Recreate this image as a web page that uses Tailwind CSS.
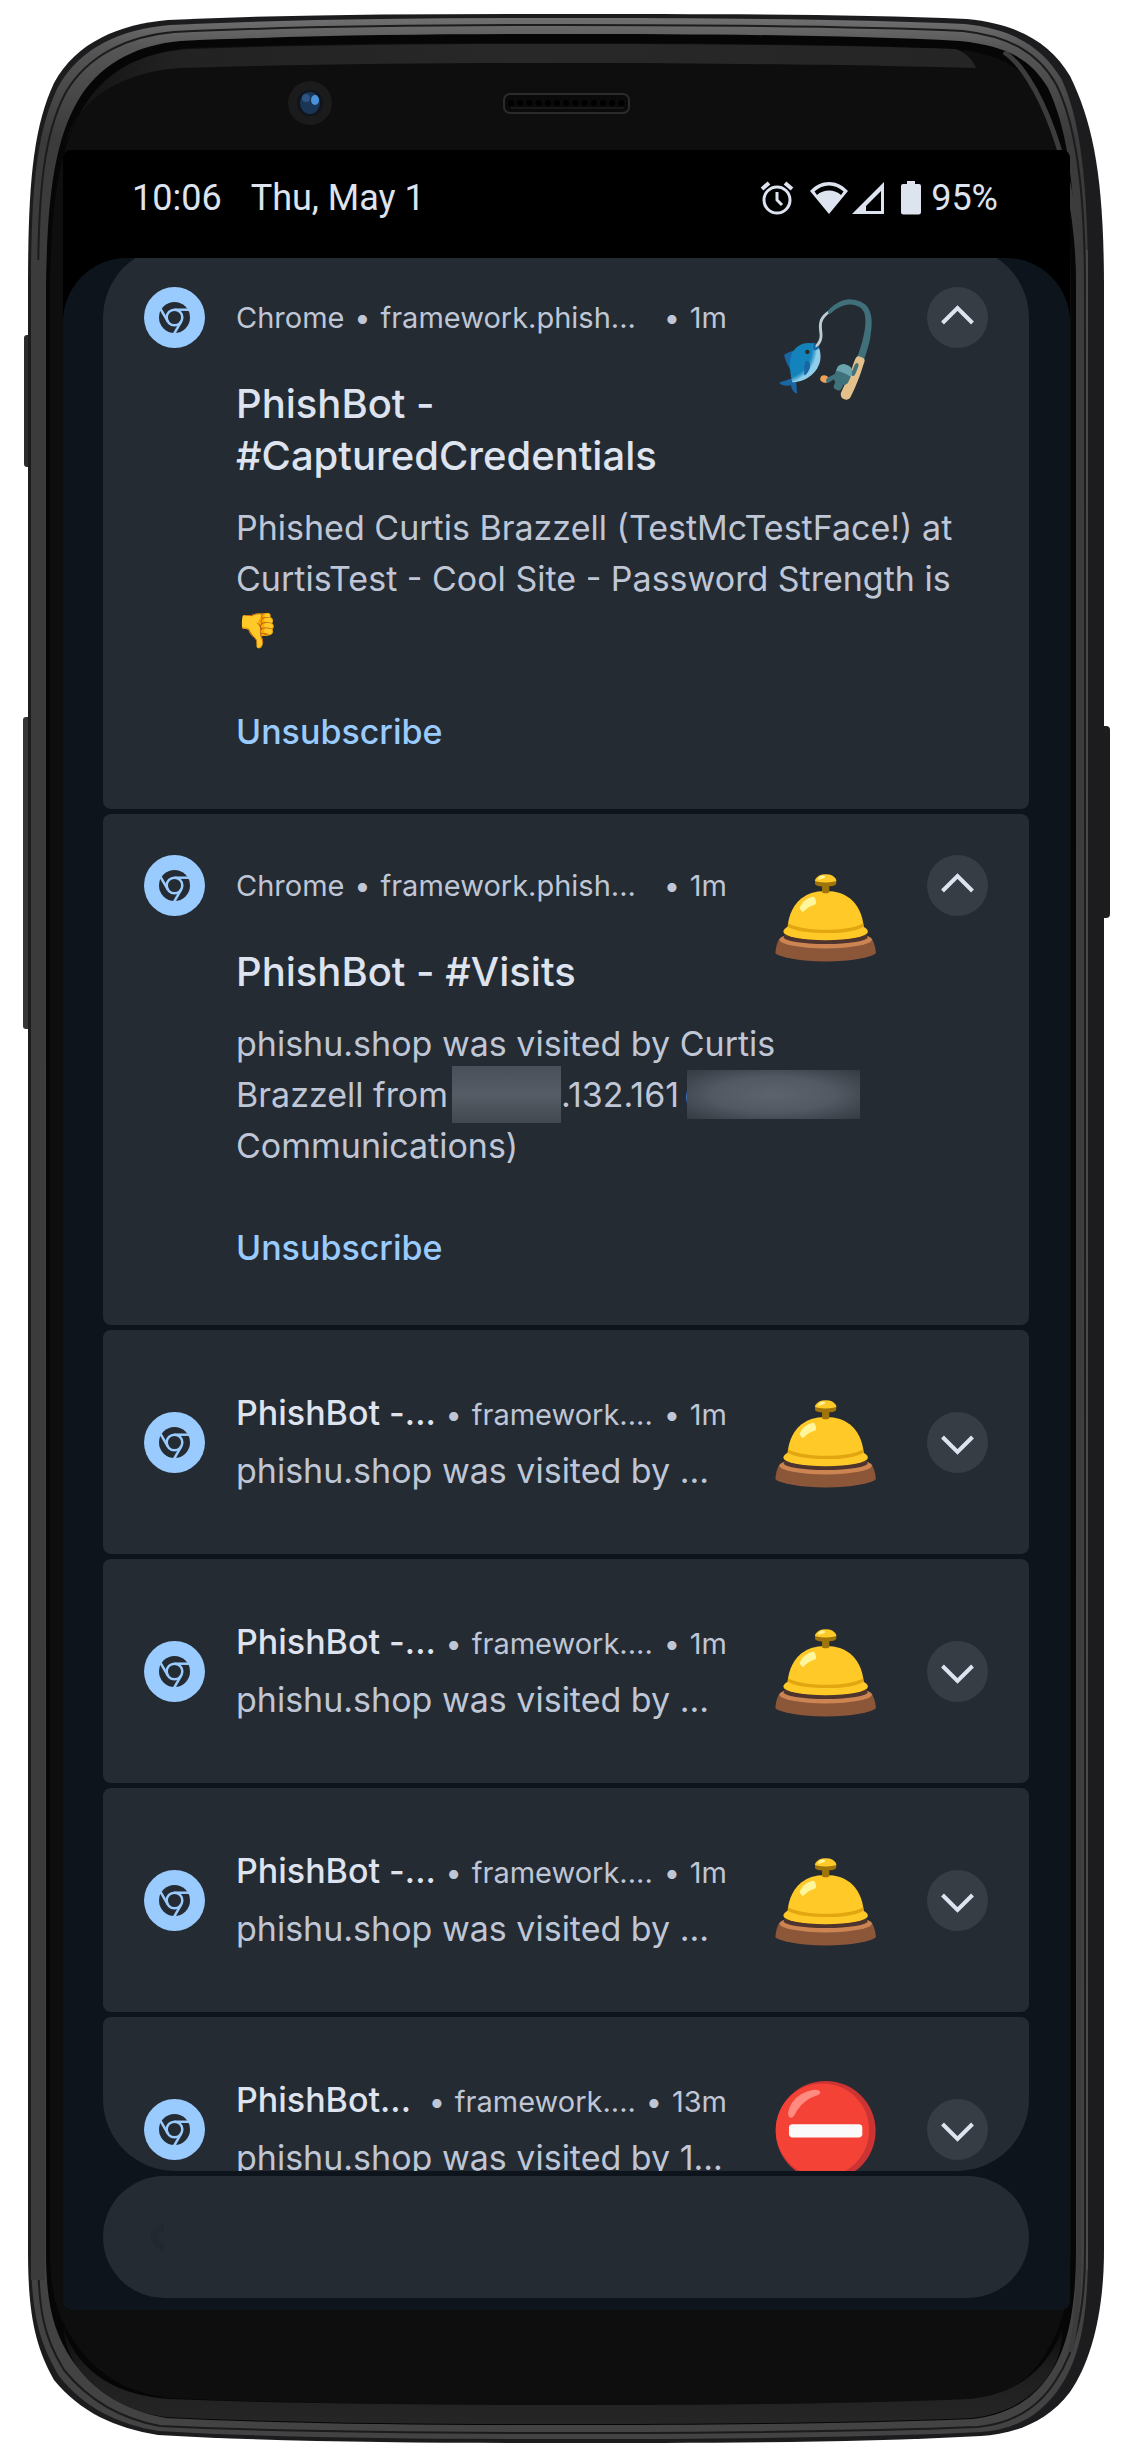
<!DOCTYPE html>
<html lang="en">
<head>
<meta charset="utf-8">
<meta name="viewport" content="width=device-width, initial-scale=1">
<title>Notifications</title>
<script src="https://cdn.jsdelivr.net/npm/@tailwindcss/browser@4"></script>
</head>
<body class="bg-white font-['Inter',sans-serif]">

<!-- Shared icon symbols -->
<svg class="hidden" aria-hidden="true">
  <symbol id="chrome" viewBox="0 0 61 61">
    <circle cx="30.500" cy="30.500" r="30.500" fill="#99cbff"/>
    <circle cx="30.500" cy="30.500" r="15.500" fill="#252b33"/>
    <g stroke="#99cbff" stroke-width="2.500" fill="none">
      <circle cx="30.500" cy="30.500" r="7.800"/>
      <path d="M30.500 22.700H47"/>
      <path d="M30.500 22.700H47" transform="rotate(120 30.500 30.500)"/>
      <path d="M30.500 22.700H47" transform="rotate(240 30.500 30.500)"/>
    </g>
  </symbol>
  <symbol id="up" viewBox="0 0 61 61"><path d="M15.500 36 30.500 21l15 15" fill="none" stroke="#dde3ef" stroke-width="4"/></symbol>
  <symbol id="down" viewBox="0 0 61 61"><path d="M15.500 25 30.500 40l15-15" fill="none" stroke="#dde3ef" stroke-width="4"/></symbol>
</svg>

<div class="relative pt-[150px] pb-[153px] pl-[63px] pr-[53px]">

  <!-- Phone body -->
  <svg class="absolute inset-0 h-full w-full" viewBox="0 0 1123 2463" preserveAspectRatio="none" aria-hidden="true">
    <defs>
      <linearGradient id="rim" x1="0" y1="0" x2="0" y2="1">
        <stop offset="0" stop-color="#707070"/><stop offset=".012" stop-color="#565656"/><stop offset=".05" stop-color="#3b3b3b"/><stop offset="1" stop-color="#434343"/>
      </linearGradient>
      <linearGradient id="glare" x1="0" y1="0" x2="1" y2="0">
        <stop offset="0" stop-color="#111"/><stop offset=".12" stop-color="#222"/><stop offset=".5" stop-color="#282828"/><stop offset="1" stop-color="#252525"/>
      </linearGradient>
      <linearGradient id="chin" x1="0" y1="0" x2="0" y2="1">
        <stop offset="0" stop-color="#0d0d0d"/><stop offset=".4" stop-color="#1d1d1d"/><stop offset="1" stop-color="#262626"/>
      </linearGradient>
    </defs>
    <rect x="24" y="335" width="10" height="132" rx="3" fill="#2c2c2c"/>
    <rect x="23" y="717" width="10" height="312" rx="3" fill="#363636"/>
    <rect x="1099" y="726" width="11" height="192" rx="4" fill="#1d1d1e"/>
    <path fill="#1c1c1f" d="M28 290C28 190 32 130 54 83C76 42 120 24 168 20C300 14 430 14 566 14C700 14 850 14 967 19C1017 24 1050 42 1070 76C1094 125 1104 180 1104 290V2250C1104 2310 1092 2360 1070 2392C1045 2425 1010 2434 981 2436C850 2443 700 2443 566 2443C430 2443 280 2442 158 2435C115 2428 80 2412 54 2380C34 2345 28 2310 28 2250Z"/>
    <path fill="url(#rim)" d="M31 290C31 190 36 133 58 87C80 47 122 29 170 25C300 19 430 18 566 18C700 18 850 19 965 24C1012 29 1042 46 1062 80C1080 120 1088 180 1088 290V2250C1088 2310 1082 2352 1062 2384C1040 2419 1010 2430 981 2432C850 2438 700 2439 566 2439C430 2439 280 2438 158 2431C118 2424 84 2408 59 2376C38 2341 31 2310 31 2250Z"/>
    <path fill="none" stroke="#1c1c1c" stroke-width="2" d="M38 290C38 190 44 133 66 92C88 55 128 36 174 32C300 26 430 25 566 25C700 25 850 26 963 31C1008 36 1038 52 1056 84C1074 120 1085 180 1085 290V2250C1085 2310 1076 2350 1056 2380C1036 2412 1008 2424 978 2427C850 2432 700 2433 566 2433C430 2433 280 2432 160 2426C122 2419 90 2402 64 2370C44 2338 38 2310 38 2250"/>
    <path fill="#3b3b3b" d="M31 260H45V2280H31Z"/>
    <path fill="#060606" d="M46 290C47 190 56 134 82 94C104 62 138 45 180 41C320 35 430 34 566 34C700 34 850 35 960 41C1006 46 1030 58 1048 88C1068 130 1076 190 1076 290V2250C1076 2300 1070 2345 1050 2374C1030 2405 1000 2416 972 2419C850 2424 700 2425 566 2425C430 2425 290 2424 166 2418C128 2411 96 2394 72 2360C52 2330 46 2300 46 2250Z"/>
    <path fill="#0e0e0e" d="M50 290C51 190 62 138 88 100C108 70 140 54 186 48C320 43 430 43 566 43C700 43 850 44 955 49C1000 54 1022 66 1042 98C1062 138 1071 190 1071 290V2250C1071 2300 1060 2335 1040 2362C1020 2390 996 2396 968 2399C850 2404 700 2405 566 2405C430 2405 290 2404 170 2398C134 2394 104 2380 80 2350C58 2320 50 2296 50 2250Z"/>
    <path fill="url(#glare)" d="M64 148C75 100 120 72 180 68C300 64 450 63 566 63C750 63 900 66 976 68C972 58 966 53 955 49C850 45 700 44 566 44C430 44 300 45 190 49C120 53 85 90 64 148Z"/>
    <path fill="url(#chin)" d="M64 2330C80 2375 120 2396 170 2399C290 2404 430 2405 566 2405C700 2405 850 2404 968 2399C1010 2396 1045 2375 1062 2330C1064 2370 1030 2412 972 2418C850 2423 700 2424 566 2424C430 2424 290 2423 166 2417C110 2410 66 2370 64 2330Z"/>
    <path fill="none" stroke="#3c3c3c" stroke-width="5" d="M1004 52C1035 72 1078 160 1079 290V2250C1079 2290 1076 2330 1070 2352"/>
    <path fill="none" stroke="#575757" stroke-width="1" d="M1087 250V2270"/>
    <circle cx="310" cy="103" r="22" fill="#1b1b1b"/>
    <circle cx="310" cy="103" r="13" fill="#10151d"/>
    <ellipse cx="310" cy="103" rx="10" ry="11" fill="#1b3655"/>
    <ellipse cx="315" cy="100" rx="4" ry="5" fill="#4b92dc"/>
    <ellipse cx="306" cy="98" rx="4" ry="4" fill="#2b5684"/>
    <rect x="504" y="94" width="125" height="19" rx="6" fill="#0a0a0a" stroke="#2b2b2b" stroke-width="2"/>
    <path d="M511 103H625" stroke="#000" stroke-width="6" stroke-linecap="round" stroke-dasharray="0 9.200"/>
    <path d="M511 108H624" stroke="#252525" stroke-width="1"/>
  </svg>

  <main class="relative overflow-hidden rounded-lg bg-black">

    <!-- Status bar -->
    <header class="flex h-[108px] items-start justify-between pt-[27px] pl-[69px] pr-[72px] font-['Roboto',sans-serif] text-[36px] leading-[42px] text-[#dde3ef]">
      <div class="flex gap-[29px]"><time>10:06</time><span>Thu, May 1</span></div>
      <div class="flex items-center">
        <svg class="h-[34px] w-[34px]" viewBox="0 0 34 34" fill="none" stroke="#dde3ef" role="img" aria-label="Alarm set">
          <circle cx="17" cy="19" r="13" stroke-width="3"/><path d="M17 11v8l5 5" stroke-width="3"/><path d="M2 8l7-6M32 8l-7-6" stroke-width="4"/>
        </svg>
        <svg class="ml-4 h-8 w-[38px]" viewBox="0 0 38 32" fill="#dde3ef" role="img" aria-label="Wi-Fi">
          <path fill-rule="evenodd" d="M0 9C11-3 27-3 38 9L19 32ZM4.500 9.500 7 13C13 7 25 7 31 13L33.500 9.500C25 1.500 13 1.500 4.500 9.500Z"/>
        </svg>
        <svg class="ml-1 h-8 w-8" viewBox="0 0 32 32" fill="#dde3ef" role="img" aria-label="Mobile signal">
          <path fill-rule="evenodd" d="M0 32 32 0V32ZM14 29H29V9L14 24Z"/>
        </svg>
        <svg class="ml-[17px] h-[34px] w-5" viewBox="0 0 20 34" fill="#dde3ef" role="img" aria-label="Battery">
          <path d="M6 0H14V3H18Q20 3 20 5V31Q20 33.500 17.500 33.500H2.500Q0 33.500 0 31V5Q0 3 2 3H6Z"/>
        </svg>
        <span class="ml-2.5">95%</span>
      </div>
    </header>

    <!-- Notification shade -->
    <section class="rounded-t-[64px] bg-[#0d141b] pb-3 pl-10 pr-[41px]" aria-label="Notifications">
      <div class="flex flex-col gap-[5px] overflow-hidden">

        <article class="-mt-3 rounded-t-[72px] rounded-b-lg bg-[#252b33] px-[41px] pt-[41px] pb-[52px]">
          <div class="flex h-[61px] items-start">
            <svg class="size-[61px] shrink-0"><use href="#chrome"/></svg>
            <div class="ml-[31px] flex h-[61px] min-w-0 flex-1 items-center text-[29px] whitespace-nowrap text-[#bfc6d6]">
              <span>Chrome</span><span class="w-9 text-center">•</span><span>framework.phish...</span><span class="ml-auto w-9 text-center">•</span><span>1m</span>
            </div>
            <span class="mt-[9px] ml-[46px] flex h-[104px] w-[104px] shrink-0 items-center justify-center text-[91px] leading-[104px]">🎣</span>
            <button class="ml-[50px] size-[61px] shrink-0 rounded-full bg-[#373d45]" aria-label="Collapse"><svg class="size-[61px]"><use href="#up"/></svg></button>
          </div>
          <div class="pl-[92px]">
            <h2 class="mt-[30px] text-[40px] leading-[52px] font-medium text-[#dde3ef]">PhishBot -<br>#CapturedCredentials</h2>
            <p class="mt-5 text-[34px] leading-[51px] text-[#bfc6d6]">Phished Curtis Brazzell (TestMcTestFace!) at<br>CurtisTest - Cool Site - Password Strength is<br>👎</p>
            <button class="mt-[51px] block text-[34px] leading-[51px] font-medium text-[#99cbff]">Unsubscribe</button>
          </div>
        </article>

        <article class="rounded-lg bg-[#252b33] px-[41px] pt-[41px] pb-[52px]">
          <div class="flex h-[61px] items-start">
            <svg class="size-[61px] shrink-0"><use href="#chrome"/></svg>
            <div class="ml-[31px] flex h-[61px] min-w-0 flex-1 items-center text-[29px] whitespace-nowrap text-[#bfc6d6]">
              <span>Chrome</span><span class="w-9 text-center">•</span><span>framework.phish...</span><span class="ml-auto w-9 text-center">•</span><span>1m</span>
            </div>
            <span class="mt-[9px] ml-[46px] flex h-[104px] w-[104px] shrink-0 items-center justify-center text-[91px] leading-[104px]">🛎️</span>
            <button class="ml-[50px] size-[61px] shrink-0 rounded-full bg-[#373d45]" aria-label="Collapse"><svg class="size-[61px]"><use href="#up"/></svg></button>
          </div>
          <div class="pl-[92px]">
            <h2 class="mt-[30px] text-[40px] leading-[52px] font-medium text-[#dde3ef]">PhishBot - #Visits</h2>
            <p class="mt-5 text-[34px] leading-[51px] text-[#bfc6d6]">phishu.shop was visited by Curtis<br><span class="flex h-[51px] items-center whitespace-nowrap">Brazzell from<span class="ml-1 h-[57px] w-[109px] bg-linear-to-b from-[#484f58] via-[#565d66] to-[#41484f]"></span>.132.161<span class="ml-1">(</span><span class="relative -ml-2 h-[49px] w-[173px] bg-radial from-[#5d636c] via-[#535962] via-50% to-[#343a42]"></span></span>Communications)</p>
            <button class="mt-[51px] block text-[34px] leading-[51px] font-medium text-[#99cbff]">Unsubscribe</button>
          </div>
        </article>

        <article class="flex h-[224px] items-center rounded-lg bg-[#252b33] px-[41px]">
          <svg class="size-[61px] shrink-0"><use href="#chrome"/></svg>
          <div class="ml-[31px] min-w-0 flex-1 whitespace-nowrap text-[#bfc6d6]">
            <div class="flex h-[58px] items-baseline text-[29px] leading-[58px]">
              <h2 class="text-[34px] font-medium text-[#dde3ef]">PhishBot -...</h2><span class="w-9 text-center">•</span><span>framework....</span><span class="ml-auto w-9 text-center">•</span><span>1m</span>
            </div>
            <p class="text-[34px] leading-[58px]">phishu.shop was visited by ...</p>
          </div>
          <span class="ml-[46px] flex h-[104px] w-[104px] shrink-0 items-center justify-center text-[91px] leading-[104px]">🛎️</span>
          <button class="ml-[50px] size-[61px] shrink-0 rounded-full bg-[#373d45]" aria-label="Expand"><svg class="size-[61px]"><use href="#down"/></svg></button>
        </article>

        <article class="flex h-[224px] items-center rounded-lg bg-[#252b33] px-[41px]">
          <svg class="size-[61px] shrink-0"><use href="#chrome"/></svg>
          <div class="ml-[31px] min-w-0 flex-1 whitespace-nowrap text-[#bfc6d6]">
            <div class="flex h-[58px] items-baseline text-[29px] leading-[58px]">
              <h2 class="text-[34px] font-medium text-[#dde3ef]">PhishBot -...</h2><span class="w-9 text-center">•</span><span>framework....</span><span class="ml-auto w-9 text-center">•</span><span>1m</span>
            </div>
            <p class="text-[34px] leading-[58px]">phishu.shop was visited by ...</p>
          </div>
          <span class="ml-[46px] flex h-[104px] w-[104px] shrink-0 items-center justify-center text-[91px] leading-[104px]">🛎️</span>
          <button class="ml-[50px] size-[61px] shrink-0 rounded-full bg-[#373d45]" aria-label="Expand"><svg class="size-[61px]"><use href="#down"/></svg></button>
        </article>

        <article class="flex h-[224px] items-center rounded-lg bg-[#252b33] px-[41px]">
          <svg class="size-[61px] shrink-0"><use href="#chrome"/></svg>
          <div class="ml-[31px] min-w-0 flex-1 whitespace-nowrap text-[#bfc6d6]">
            <div class="flex h-[58px] items-baseline text-[29px] leading-[58px]">
              <h2 class="text-[34px] font-medium text-[#dde3ef]">PhishBot -...</h2><span class="w-9 text-center">•</span><span>framework....</span><span class="ml-auto w-9 text-center">•</span><span>1m</span>
            </div>
            <p class="text-[34px] leading-[58px]">phishu.shop was visited by ...</p>
          </div>
          <span class="ml-[46px] flex h-[104px] w-[104px] shrink-0 items-center justify-center text-[91px] leading-[104px]">🛎️</span>
          <button class="ml-[50px] size-[61px] shrink-0 rounded-full bg-[#373d45]" aria-label="Expand"><svg class="size-[61px]"><use href="#down"/></svg></button>
        </article>

        <!-- Last card slides under the shelf -->
        <div class="h-[154px] overflow-hidden rounded-t-lg rounded-b-[72px] bg-[#252b33]">
          <article class="flex h-[224px] items-center px-[41px]">
            <svg class="size-[61px] shrink-0"><use href="#chrome"/></svg>
            <div class="ml-[31px] min-w-0 flex-1 whitespace-nowrap text-[#bfc6d6]">
              <div class="flex h-[58px] items-baseline text-[29px] leading-[58px]">
                <h2 class="text-[34px] font-medium text-[#dde3ef]">PhishBot...</h2><span class="ml-auto w-9 text-center">•</span><span>framework....</span><span class="w-9 text-center">•</span><span>13m</span>
              </div>
              <p class="text-[34px] leading-[58px]">phishu.shop was visited by 1...</p>
            </div>
            <span class="ml-[46px] flex h-[104px] w-[104px] shrink-0 items-center justify-center text-[91px] leading-[104px]">⛔</span>
            <button class="ml-[50px] size-[61px] shrink-0 rounded-full bg-[#373d45]" aria-label="Expand"><svg class="size-[61px]"><use href="#down"/></svg></button>
          </article>
        </div>

        <div class="flex h-[122px] items-center rounded-full bg-[#252b33] pl-[46px]">
          <svg class="h-7 w-4" viewBox="0 0 16 28" aria-hidden="true"><path d="M15 1A13 13 0 0 0 15 27V20A6 6 0 0 1 15 8Z" fill="#222830"/></svg>
        </div>
      </div>
    </section>
  </main>
</div>
</body>
</html>
